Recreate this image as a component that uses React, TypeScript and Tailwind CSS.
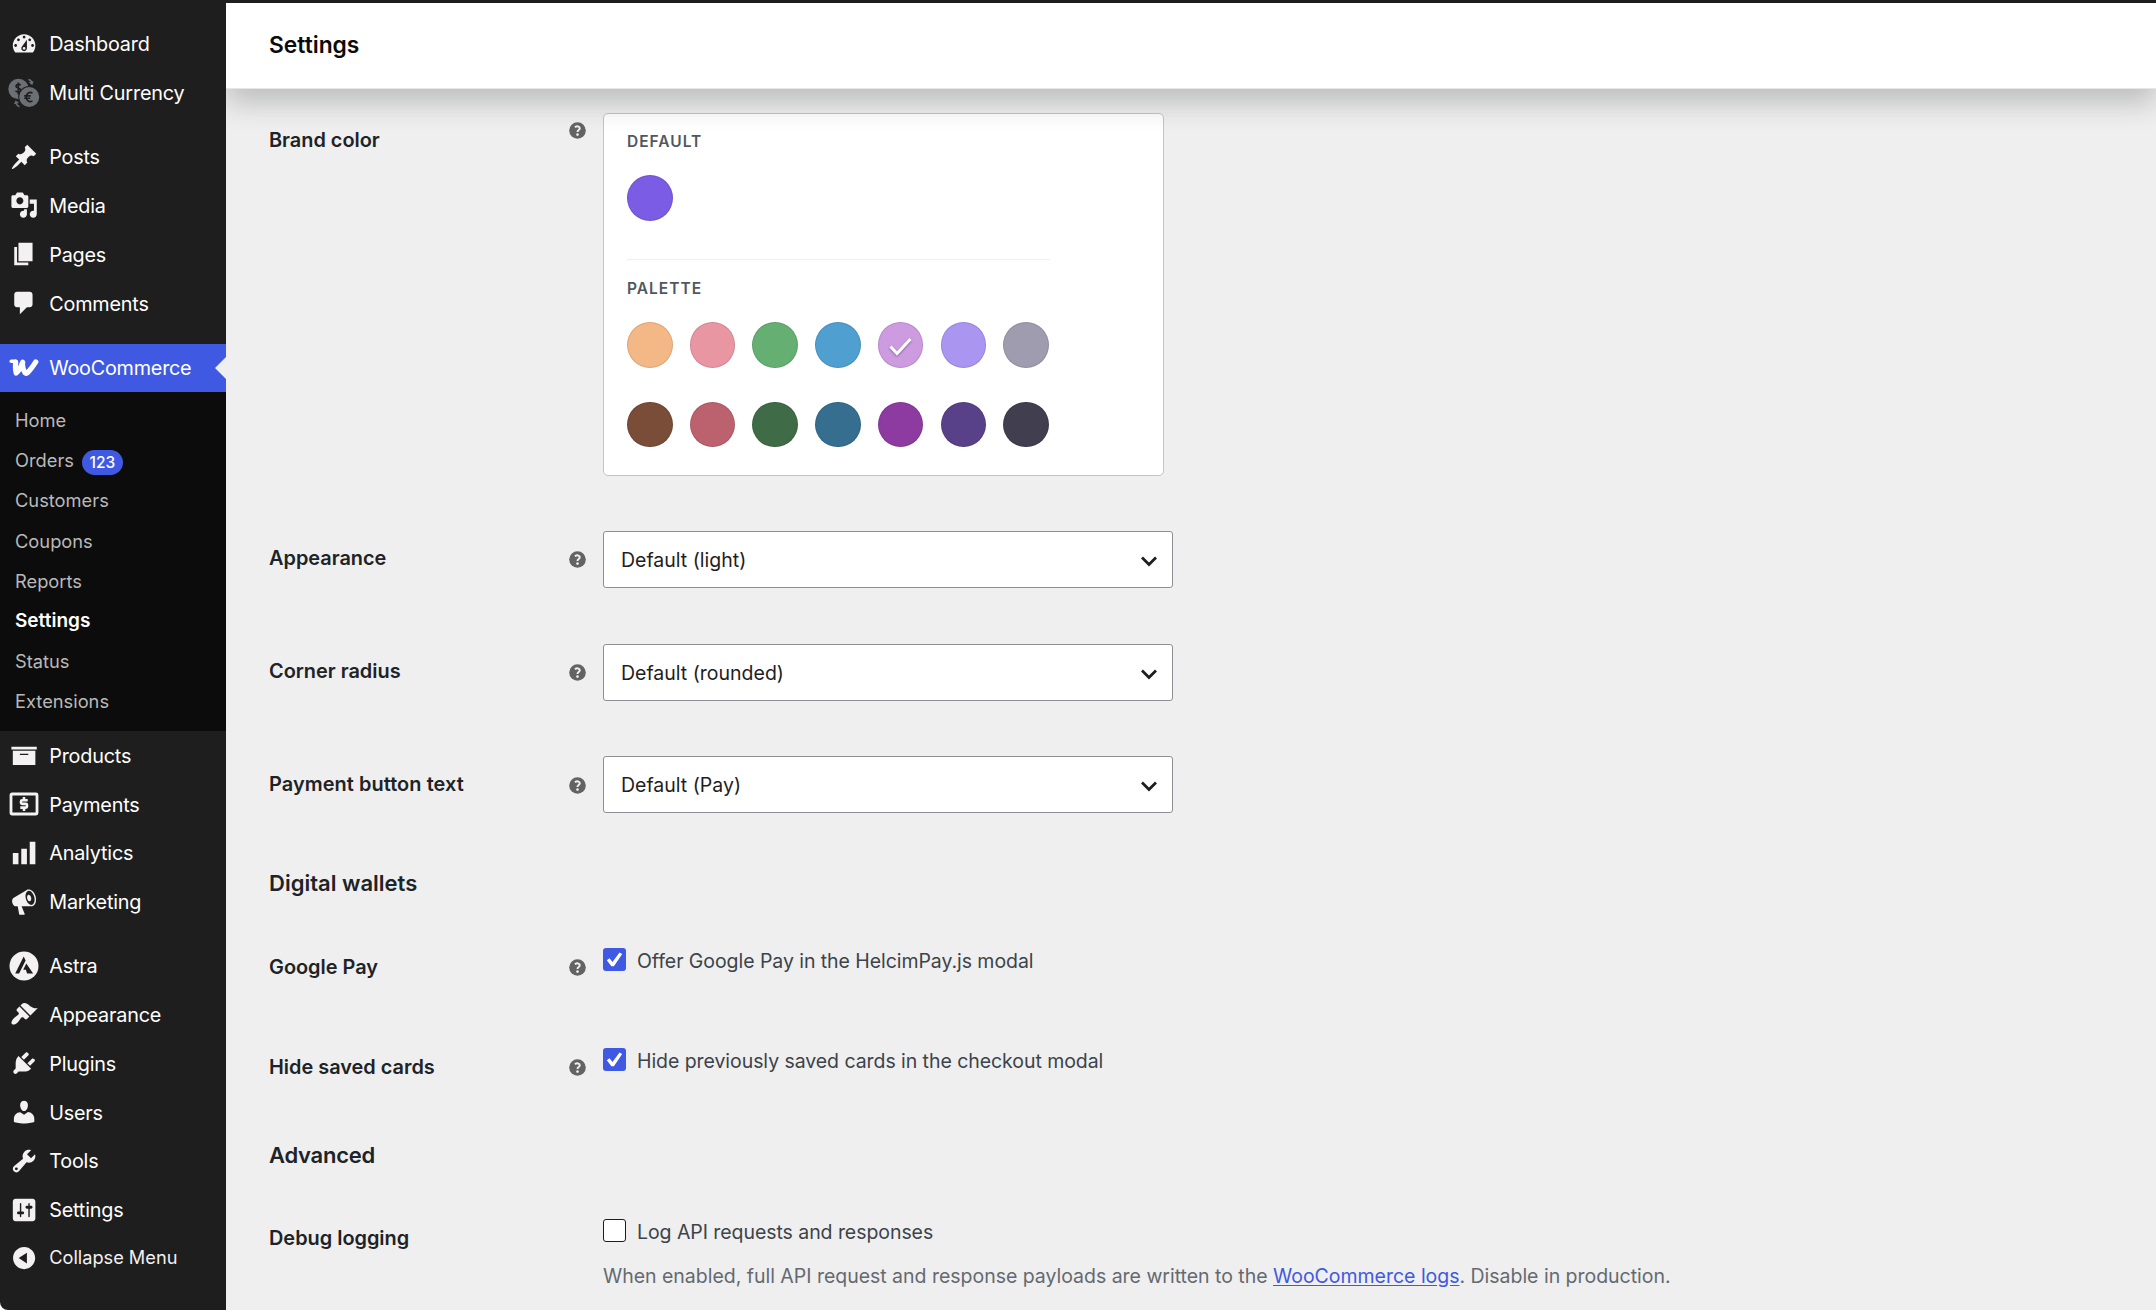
import type { ReactNode } from 'react'

type Item = { label: string; icon: ReactNode }

function Dash({ d }: { d: string }) {
  return (
    <svg className="h-[28.2px] w-[28.2px]" viewBox="0 0 20 20" fill="currentColor" fillRule="evenodd">
      <path d={d} />
    </svg>
  )
}

function MultiCurrencyIcon() {
  return (
    <svg className="h-8 w-8 shrink-0 text-[#6c7075]" viewBox="0 0 32 32" fill="none">
      <circle cx="10.5" cy="12" r="10.2" fill="currentColor" />
      <path d="M12.6 8.4c-.6-1.3-4.4-1.5-4.6.7-.2 2.4 4.8 1.5 4.6 4.2-.2 2.3-4.3 2.1-5 .4M10.3 5.5v12" stroke="#1e1e1e" strokeWidth="1.7" />
      <circle cx="21.2" cy="20" r="11" fill="#1e1e1e" />
      <circle cx="21.2" cy="20" r="10" fill="currentColor" />
      <path d="M24.5 16.2c-3-2-6.3.2-6.3 3.8s3.3 5.8 6.3 3.8M16.2 18.9h6.5M16.2 21.2h6" stroke="#1e1e1e" strokeWidth="1.6" />
      <path d="M20.5 2.5c2 .3 3.2 1.6 3.4 3.9M21.6 5l2.3 2 1-2.8M11.5 29.5c-2-.3-3-1.6-3.4-3.9M6.7 27l1.2-2.5 2.5 1.5" stroke="currentColor" strokeWidth="1.4" />
    </svg>
  )
}

function WooIcon() {
  return (
    <svg className="h-[17px] w-[30px] shrink-0 text-white" viewBox="0 0 30 17" fill="none" stroke="currentColor" strokeLinecap="round" strokeLinejoin="round">
      <path d="M2.2 2.3h4.5" strokeWidth="3.4" />
      <path d="M6.7 3.2c-.4 3.7-.4 7.500.5 10.800 2.700-2.200 4.900-6.200 6.500-10.800-.5 4 .1 7.600 2.300 10.600.7.6 1.700.6 2.400 0C21.700 10.600 24.300 6.800 26.800 2.900" strokeWidth="5.2" />
    </svg>
  )
}

function PaymentsIcon() {
  return (
    <svg className="h-6 w-[30px] shrink-0" viewBox="0 0 30 24" fill="none" stroke="currentColor">
      <rect x="2" y="2" width="26" height="20" rx="1" strokeWidth="2.8" />
      <path d="M18.7 8.3h-5.5c-.6 0-1.2.5-1.2 1.1v1.4c0 .6.6 1.1 1.2 1.1h3.6c.6 0 1.2.5 1.2 1.1v1.5c0 .6-.6 1.1-1.2 1.1h-5.5M15 5v3M15 15.8V19" strokeWidth="2.6" />
    </svg>
  )
}

function AstraIcon() {
  return (
    <svg className="h-[30px] w-[30px] shrink-0" viewBox="0 0 30 30">
      <circle cx="15" cy="15" r="14.5" fill="currentColor" />
      <path d="M14.7 5.5 6.2 22.5h3.9l6.5-13zM17.3 12.5l-3.1 6.3h2.7l1.2 3.7h6z" fill="#1e1e1e" />
    </svg>
  )
}

const groups: Item[][] = [
  [
    { label: 'Dashboard', icon: <Dash d="M3.76 16h12.48c1.1-1.37 1.76-3.11 1.76-5 0-4.42-3.58-8-8-8s-8 3.58-8 8c0 1.89.66 3.63 1.76 5zM10 4c.55 0 1 .45 1 1s-.45 1-1 1-1-.45-1-1 .45-1 1-1zM6 6c.55 0 1 .45 1 1s-.45 1-1 1-1-.45-1-1 .45-1 1-1zm8 0c.55 0 1 .45 1 1s-.45 1-1 1-1-.45-1-1 .45-1 1-1zm-5.37 5.55L12 7v6c0 1.1-.9 2-2 2s-2-.9-2-2c0-.57.24-1.08.63-1.45zM4 10c.55 0 1 .45 1 1s-.45 1-1 1-1-.45-1-1 .45-1 1-1zm12 0c.55 0 1 .45 1 1s-.45 1-1 1-1-.45-1-1 .45-1 1-1zm-5 3c0-.55-.45-1-1-1s-1 .45-1 1 .45 1 1 1 1-.45 1-1z" /> },
    { label: 'Multi Currency', icon: <MultiCurrencyIcon /> },
  ],
  [
    { label: 'Posts', icon: <Dash d="M10.44 3.02l1.82-1.82 6.36 6.35-1.83 1.82c-1.05-.68-2.48-.57-3.41.36l-.75.75c-.92.93-1.04 2.35-.35 3.41l-1.83 1.82-2.41-2.41-2.8 2.79c-.42.42-3.38 2.71-3.8 2.29s1.86-3.39 2.28-3.81l2.79-2.79L4.1 9.36l1.83-1.82c1.05.69 2.48.57 3.4-.36l.75-.75c.93-.92 1.05-2.35.36-3.41z" /> },
    { label: 'Media', icon: <Dash d="M13 11V4c0-.55-.45-1-1-1h-1.67L9 1H5L3.67 3H2c-.55 0-1 .45-1 1v7c0 .55.45 1 1 1h10c.55 0 1-.45 1-1zM7 4.5c1.38 0 2.5 1.12 2.5 2.5S8.38 9.5 7 9.5 4.5 8.38 4.5 7 5.62 4.5 7 4.5zM14 6h5v10.5c0 1.38-1.12 2.5-2.5 2.5S14 17.88 14 16.5s1.12-2.5 2.5-2.5c.17 0 .34.02.5.05V9h-3V6zm-4 8.05V13h2v3.5c0 1.38-1.12 2.5-2.5 2.5S7 17.88 7 16.5 8.12 14 9.5 14c.17 0 .34.02.5.05z" /> },
    { label: 'Pages', icon: <Dash d="M6 15V2h10v13H6zm-1 1h8v2H3V5h2v11z" /> },
    { label: 'Comments', icon: <Dash d="M5 2h9c1.1 0 2 .9 2 2v7c0 1.1-.9 2-2 2h-2l-5 5v-5H5c-1.1 0-2-.9-2-2V4c0-1.1.9-2 2-2z" /> },
  ],
  [
    { label: 'Products', icon: <Dash d="M19 4v2H1V4h18zM2 7h16v10H2V7zm11 3V9H7v1h6z" /> },
    { label: 'Payments', icon: <PaymentsIcon /> },
    { label: 'Analytics', icon: <Dash d="M18 18V2h-4v16h4zm-6 0V7H8v11h4zm-6 0v-8H2v8h4z" /> },
    { label: 'Marketing', icon: <Dash d="M18.15 5.94c.46 1.62.38 3.22-.02 4.48-.42 1.28-1.26 2.18-2.3 2.48-.16.06-.26.06-.4.06-.06.02-.12.02-.18.02-.06.02-.14.02-.22.02h-6.8l2.22 5.5c.02.14-.06.26-.14.34-.08.1-.24.16-.34.16H6.95c-.1 0-.26-.06-.34-.16-.08-.08-.16-.2-.14-.34l-1-5.5H4.25l-.02-.02c-.5.06-1.08-.18-1.54-.62s-.88-1.08-1.06-1.88c-.24-.8-.2-1.56-.02-2.2.18-.62.58-1.08 1.06-1.3l.02-.02 9-5.4c.1-.06.18-.1.24-.16.06-.04.14-.08.24-.12.16-.08.28-.12.5-.18 1.04-.3 2.24.1 3.22.98s1.84 2.24 2.26 3.86zm-2.58 5.98h-.02c.4-.1.74-.34 1.04-.7.58-.7.86-1.76.86-3.04 0-.64-.1-1.3-.28-1.98-.34-1.36-1.02-2.5-1.78-3.24s-1.68-1.1-2.46-.88c-.82.22-1.4.96-1.7 2-.32 1.04-.28 2.36.06 3.72.38 1.36 1 2.5 1.8 3.24.78.74 1.62 1.1 2.48.88zm-2.54-7.08c.22-.04.42-.02.62.04.38.16.76.48 1.02 1s.42 1.2.42 1.78c0 .3-.04.56-.12.8-.18.48-.44.84-.86.94-.34.1-.8-.06-1.14-.4s-.64-.86-.78-1.5c-.18-.62-.12-1.24.02-1.72s.48-.84.82-.94z" /> },
  ],
  [
    { label: 'Astra', icon: <AstraIcon /> },
    { label: 'Appearance', icon: <Dash d="M14.48 11.06L7.41 3.99l1.5-1.5c.5-.56 2.3-.47 3.51.32 1.21.8 1.43 1.28 2.91 2.1 1.18.64 2.45 1.26 4.45.85zm-.71.71L6.7 4.7 4.93 6.47c-.39.39-.39 1.02 0 1.41l1.06 1.06c.39.39.39 1.03 0 1.42-.6.6-1.43 1.11-2.21 1.69-.35.26-.7.53-1.01.84C1.43 14.23.4 16.08 1.4 17.07c.99 1 2.84-.03 4.18-1.36.31-.31.58-.66.85-1.02.57-.78 1.08-1.61 1.69-2.21.39-.39 1.02-.39 1.41 0l1.06 1.06c.39.39 1.02.39 1.41 0z" /> },
    { label: 'Plugins', icon: <Dash d="M13.11 4.36L9.87 7.6 8 5.73l3.24-3.24c.35-.34 1.05-.2 1.56.32.52.51.66 1.21.31 1.55zm-8 1.77l.91-1.12 9.01 9.01-1.19.84c-.71.71-2.63 1.16-3.82 1.16H6.14L4.9 17.26c-.59.59-1.54.59-2.12 0-.59-.58-.59-1.53 0-2.12l1.24-1.24v-3.88c0-1.13.4-3.19 1.09-3.89zm7.26 3.97l3.24-3.24c.34-.35 1.04-.21 1.55.31.52.51.66 1.21.31 1.55l-3.24 3.25z" /> },
    { label: 'Users', icon: <Dash d="M10 9.25c-2.27 0-2.73-3.44-2.73-3.44C7 4.02 7.82 2 9.97 2c2.16 0 2.98 2.02 2.71 3.81 0 0-.41 3.44-2.68 3.44zm0 2.57L12.72 10c2.39 0 4.52 2.33 4.52 4.53v2.49s-3.65 1.13-7.24 1.13c-3.65 0-7.24-1.13-7.24-1.13v-2.49c0-2.25 1.94-4.48 4.47-4.48z" /> },
    { label: 'Tools', icon: <Dash d="M16.68 9.77c-1.34 1.34-3.3 1.67-4.95.99l-5.41 6.52c-.99.99-2.59.99-3.58 0s-.99-2.59 0-3.57l6.52-5.42c-.68-1.65-.35-3.61.99-4.95 1.28-1.28 3.12-1.62 4.72-1.06l-2.89 2.89 2.82 2.82 2.86-2.87c.53 1.58.18 3.39-1.08 4.65zM3.81 16.21c.4.39 1.04.39 1.43 0 .4-.4.4-1.04 0-1.43-.39-.4-1.03-.4-1.43 0-.39.39-.39 1.03 0 1.43z" /> },
    { label: 'Settings', icon: <Dash d="M18 16V4c0-1.1-.9-2-2-2H4c-1.1 0-2 .9-2 2v12c0 1.1.9 2 2 2h12c1.1 0 2-.9 2-2zM8 11h1c.55 0 1 .45 1 1s-.45 1-1 1H8v1.5c0 .28-.22.5-.5.5s-.5-.22-.5-.5V13H6c-.55 0-1-.45-1-1s.45-1 1-1h1V5.5c0-.28.22-.5.5-.5s.5.22.5.5V11zm5-2h-1c-.55 0-1-.45-1-1s.45-1 1-1h1V5.5c0-.28.22-.5.5-.5s.5.22.5.5V7h1c.55 0 1 .45 1 1s-.45 1-1 1h-1v5.5c0 .28-.22.5-.5.5s-.5-.22-.5-.5V9z" /> },
  ],
]

const submenu = ['Home', 'Orders', 'Customers', 'Coupons', 'Reports', 'Settings', 'Status', 'Extensions']

const lightColors = ['bg-[#f4b886]', 'bg-[#e996a3]', 'bg-[#66af73]', 'bg-[#4f9fd1]', 'bg-[#cd9be0]', 'bg-[#aa95f0]', 'bg-[#a09caf]']
const darkColors = ['bg-[#794d37]', 'bg-[#bc626f]', 'bg-[#3f6c47]', 'bg-[#366e90]', 'bg-[#8d3ba0]', 'bg-[#594189]', 'bg-[#413e4f]']

function MenuGroup({ items }: { items: Item[] }) {
  return (
    <ul>
      {items.map((item) => (
        <li key={item.label} className="flex h-[48.8px] items-center">
          <span className="flex w-[47.2px] shrink-0 items-center justify-center text-[#f3f1f1]">{item.icon}</span>
          <span className="pl-[2px] pt-[2.6px] text-[19.8px] tracking-[-0.18px] text-white">{item.label}</span>
        </li>
      ))}
    </ul>
  )
}

function Sidebar() {
  return (
    <aside className="flex w-[226px] shrink-0 flex-col whitespace-nowrap pt-[19.5px]">
      <MenuGroup items={groups[0]} />
      <div className="h-[15.2px]" />
      <MenuGroup items={groups[1]} />
      <div className="h-[16.5px]" />
      <div className="relative flex h-12 items-center bg-[#4059e3]">
        <span className="flex w-[47.2px] shrink-0 items-center justify-center">
          <WooIcon />
        </span>
        <span className="pl-[2px] pt-[2px] text-[19.8px] tracking-[-0.22px] text-white">WooCommerce</span>
        <span className="absolute right-0 top-[13px] border-y-[11.5px] border-r-[11px] border-y-transparent border-r-[#efefef]" />
      </div>
      <ul className="h-[339px] bg-[#0c0c0c] pl-[15px] pt-[8.6px] text-[18.3px] text-[#b9b9b9]">
        {submenu.map((name) => (
          <li key={name} className={name === 'Settings' ? 'flex h-[40.2px] items-center text-[19px] font-semibold text-white' : 'flex h-[40.2px] items-center'}>
            {name}
            {name === 'Orders' && (
              <span className="ml-2 mt-[3px] flex h-[25px] w-[41px] items-center justify-center rounded-full bg-[#4059e3] text-[15.5px] font-medium text-white">
                123
              </span>
            )}
          </li>
        ))}
      </ul>
      <MenuGroup items={groups[2]} />
      <div className="h-[15.2px]" />
      <MenuGroup items={groups[3]} />
      <div className="flex h-12 items-center">
        <span className="flex w-[47.2px] shrink-0 items-center justify-center text-[#f3f1f1]">
          <Dash d="M10 2.16c4.33 0 7.84 3.51 7.84 7.84s-3.51 7.84-7.84 7.84S2.16 14.33 2.16 10 5.71 2.16 10 2.16zm2 11.72V6.12L6.18 9.97z" />
        </span>
        <span className="pl-[2px] text-[18.2px] text-[#f3f1f1]">Collapse Menu</span>
      </div>
    </aside>
  )
}

function Help() {
  return (
    <svg className="h-[17px] w-[17px]" viewBox="0 0 17 17">
      <circle cx="8.5" cy="8.5" r="8.3" fill="#636363" />
      <path d="M5.9 5.2c1.8-1.3 4.9-1.2 4.9 1 0 1.9-2.3 1.7-2.3 3.7" fill="none" stroke="#efefef" strokeWidth="2" />
      <circle cx="8.5" cy="12.6" r="1.3" fill="#efefef" />
    </svg>
  )
}

function Row({ label, help = true, className, labelClass, helpClass = '', children }: {
  label: string
  help?: boolean
  className: string
  labelClass: string
  helpClass?: string
  children: ReactNode
}) {
  return (
    <div className={`flex items-start ${className}`}>
      <div className={`w-[300px] shrink-0 text-[19.9px] font-semibold leading-7 text-[#1d2327] ${labelClass}`}>{label}</div>
      <div className={`w-[34px] shrink-0 ${helpClass}`}>{help && <Help />}</div>
      {children}
    </div>
  )
}

function Select({ value }: { value: string }) {
  return (
    <div className="flex h-[57px] w-[570px] items-center justify-between rounded-[3px] border-[1.5px] border-[#8c8f94] bg-white pl-[17px] pr-[13px] text-[19.5px] text-[#1e1e1e]">
      <span className="pt-0.5">{value}</span>
      <svg className="mt-[3px] h-5 w-5" viewBox="0 0 20 20" fill="none" stroke="#1e1e1e" strokeWidth="2.8">
        <path d="M3 6.5l7 7 7-7" />
      </svg>
    </div>
  )
}

function Checkbox({ checked = false, label }: { checked?: boolean; label: string }) {
  return (
    <label className="flex items-start pt-px text-[19.5px] leading-7 tracking-[-0.06px] text-[#3c434a]">
      {checked ? (
        <span className="mt-px flex h-[23px] w-[23px] items-center justify-center rounded-[3px] bg-[#4059e3]">
          <svg className="h-[23px] w-[23px]" viewBox="0 0 23 23" fill="#fff">
            <path d="M3.8 12.3l2.7-2 3 3.6 7-9.4 2.7 1.5-8.3 12.3h-2.5z" />
          </svg>
        </span>
      ) : (
        <span className="mt-px h-[23px] w-[23px] rounded-[3px] border-[1.5px] border-[#1e1e1e] bg-white" />
      )}
      <span className="pl-[11px]">{label}</span>
    </label>
  )
}

function Swatch({ color, checked = false }: { color: string; checked?: boolean }) {
  return (
    <span className={`flex h-[45.5px] w-[45.5px] items-center justify-center rounded-full border border-black/10 bg-clip-border ${color}`}>
      {checked && (
        <svg className="h-6 w-6 drop-shadow-[0_1px_1px_rgba(0,0,0,0.35)]" viewBox="0 0 24 24" fill="none" stroke="#fff" strokeWidth="3">
          <path d="M1.5 13.5l6.500 7L21.500 6" />
        </svg>
      )}
    </span>
  )
}

export default function App() {
  return (
    <div className="bg-white">
      <div className="flex h-[1310px] w-[2156px] overflow-hidden rounded-bl-[8px] bg-[#1e1e1e] font-['Inter',sans-serif]">
        <Sidebar />
        <main className="mt-[3px] flex min-w-0 flex-1 flex-col overflow-hidden bg-[#efefef]">
          <header className="relative z-10 flex h-[86px] shrink-0 items-center border-b border-[#e6e6e6] bg-white pl-[43px] text-[22.8px] font-semibold text-[#0b0b0b] shadow-[0_14px_28px_rgba(29,35,39,0.24)]">
            Settings
          </header>
          <div className="flex flex-col pl-[43px] pt-6">
            <Row label="Brand color" className="h-[418px]" labelClass="pt-[13px]" helpClass="pt-[9px]">
              <div className="h-[363px] w-[561px] rounded-[5px] border-[1.5px] border-[#c3c4c7] bg-white px-[23px] pt-[18px] text-[#50575e]">
                <h4 className="text-[15.5px] font-semibold leading-5 tracking-[1px]">DEFAULT</h4>
                <div className="box-content h-[84px] w-[423px] border-b-[1.5px] border-[#f0f0f1] pt-[23px]">
                  <Swatch color="bg-[#7b5ce5]" />
                </div>
                <h4 className="pt-[19px] text-[15.5px] font-semibold leading-5 tracking-[1px]">PALETTE</h4>
                <div className="grid w-[439px] grid-cols-7 gap-y-[34px] pt-[23px]">
                  {lightColors.map((c, i) => <Swatch key={c} color={c} checked={i === 4} />)}
                  {darkColors.map((c) => <Swatch key={c} color={c} />)}
                </div>
              </div>
            </Row>
            <Row label="Appearance" className="h-[113px]" labelClass="pt-[13px]" helpClass="pt-[20px]">
              <Select value="Default (light)" />
            </Row>
            <Row label="Corner radius" className="h-[112px]" labelClass="pt-[13px]" helpClass="pt-[20px]">
              <Select value="Default (rounded)" />
            </Row>
            <Row label="Payment button text" className="h-[109px]" labelClass="pt-[14px] tracking-[0.08px]" helpClass="pt-[21px]">
              <Select value="Default (Pay)" />
            </Row>
            <h2 className="h-[81px] pt-0.5 text-[22px] font-semibold leading-8 text-[#1d2327]">Digital wallets</h2>
            <Row label="Google Pay" className="h-[100px]" labelClass="pt-[7px]" helpClass="pt-[13px]">
              <Checkbox checked label="Offer Google Pay in the HelcimPay.js modal" />
            </Row>
            <Row label="Hide saved cards" className="h-[91px]" labelClass="pt-[7px]" helpClass="pt-[13px]">
              <Checkbox checked label="Hide previously saved cards in the checkout modal" />
            </Row>
            <h2 className="h-20 pt-0.5 text-[22px] font-semibold leading-8 tracking-[-0.25px] text-[#1d2327]">Advanced</h2>
            <Row label="Debug logging" help={false} className="" labelClass="pt-[7px]">
              <div>
                <Checkbox label="Log API requests and responses" />
                <p className="pt-4 text-[19.5px] leading-7 tracking-[-0.02px] text-[#646970]">
                  When enabled, full API request and response payloads are written to the{' '}
                  <a className="text-[#4059e3] underline underline-offset-2" href="#">WooCommerce logs</a>. Disable in production.
                </p>
              </div>
            </Row>
          </div>
        </main>
      </div>
    </div>
  )
}
